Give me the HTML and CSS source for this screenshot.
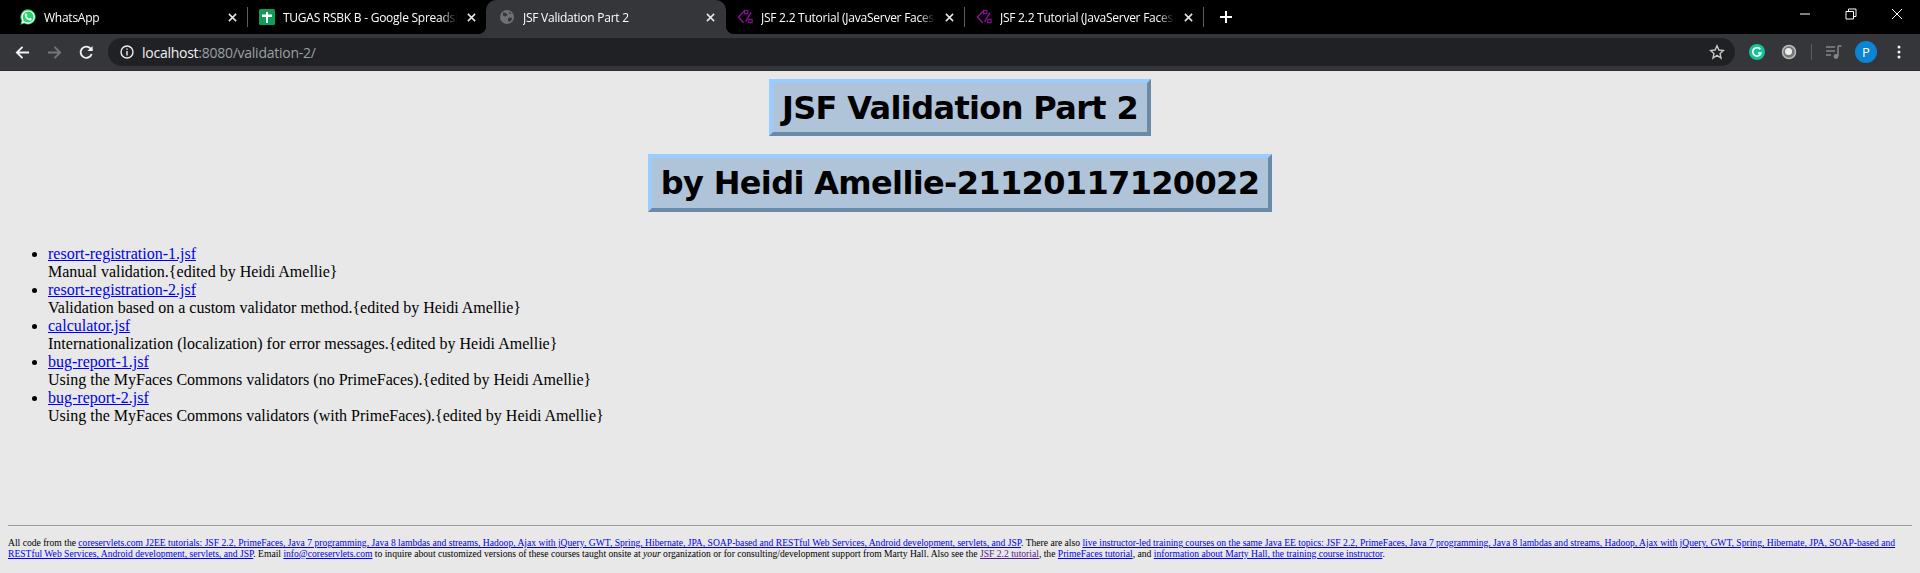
FILE: index.html
```html
<!DOCTYPE html>
<html lang="en">
<head>
<meta charset="utf-8">
<title>JSF Validation Part 2</title>
<link rel="stylesheet" href="styles.css">
</head>
<body>
<header class="chrome">
  <div class="tabstrip">
    <div class="tab tab-first">
      <svg class="favicon" viewBox="0 0 16 16"><path fill="#25d366" d="M8 0.3a7.6 7.6 0 0 0-6.5 11.5L0.4 15.7l4-1.1A7.6 7.6 0 1 0 8 0.3z"/><path fill="none" stroke="#fff" stroke-width="1.2" d="M8 2a6 6 0 0 0-5 9.2l-.6 2.3 2.4-.6A6 6 0 1 0 8 2z"/><path fill="#fff" d="M5.7 4.5c-.6.3-1 1-1 1.8 0 2 2.6 5 5 5.3.9.1 1.7-.4 1.9-1.1l.1-.8-1.7-.9-.8.9c-.9-.3-2-1.4-2.4-2.4l.7-.8-.7-1.9z"/></svg>
      <span class="tab-title">WhatsApp</span>
      <svg class="close" viewBox="0 0 10 10"><path d="M1 1l8 8M9 1l-8 8"/></svg>
    </div>
    <i class="sep"></i>
    <div class="tab tab-second">
      <svg class="favicon" viewBox="0 0 16 16"><rect width="16" height="16" rx="1.5" fill="#0f9d58"/><path fill="#fff" d="M7 3h2v2.500h4V8H9v6H7V8H3V5.500h4z"/></svg>
      <span class="tab-title">TUGAS RSBK B - Google Spreadsheets</span>
      <svg class="close" viewBox="0 0 10 10"><path d="M1 1l8 8M9 1l-8 8"/></svg>
    </div>
    <div class="tab tab-active">
      <svg class="favicon" viewBox="0 0 16 16"><circle cx="8" cy="8" r="7" fill="#6e7074"/><path fill="#35363a" d="M4 3.500l3 .5 1.500 2-2 1.500-2.500-1zM9 9l3.500-.5.500 2-2.500 2.500-1.500-1.500zM10 2.500l2.500 2-2 .5z"/></svg>
      <span class="tab-title">JSF Validation Part 2</span>
      <svg class="close" viewBox="0 0 10 10"><path d="M1 1l8 8M9 1l-8 8"/></svg>
    </div>
    <div class="tab tab-tutorial">
      <svg class="favicon wide" viewBox="0 0 18 16"><path fill="none" stroke="#8e0f9a" stroke-width="1.500" d="M8 1.500L1.500 8 7 14M15 3l-6 10"/><rect x="8" y="1" width="3.500" height="3.500" fill="none" stroke="#8e0f9a" stroke-width="1.200"/><rect x="12.500" y="10.500" width="3.500" height="3.500" fill="none" stroke="#8e0f9a" stroke-width="1.200"/></svg>
      <span class="tab-title">JSF 2.2 Tutorial (JavaServer Faces</span>
      <svg class="close" viewBox="0 0 10 10"><path d="M1 1l8 8M9 1l-8 8"/></svg>
    </div>
    <i class="sep"></i>
    <div class="tab tab-tutorial">
      <svg class="favicon wide" viewBox="0 0 18 16"><path fill="none" stroke="#8e0f9a" stroke-width="1.500" d="M8 1.500L1.500 8 7 14M15 3l-6 10"/><rect x="8" y="1" width="3.500" height="3.500" fill="none" stroke="#8e0f9a" stroke-width="1.200"/><rect x="12.500" y="10.500" width="3.500" height="3.500" fill="none" stroke="#8e0f9a" stroke-width="1.200"/></svg>
      <span class="tab-title">JSF 2.2 Tutorial (JavaServer Faces</span>
      <svg class="close" viewBox="0 0 10 10"><path d="M1 1l8 8M9 1l-8 8"/></svg>
    </div>
    <i class="sep"></i>
    <svg class="newtab" viewBox="0 0 12 12"><path d="M6 0v12M0 6h12"/></svg>
    <div class="window-controls">
      <svg viewBox="0 0 10 10"><path d="M0 5h10"/></svg>
      <svg viewBox="0 0 10 10"><path d="M0 2.500h7.500v7.500H0zM2.500 2.500V0H10v7.500H7.500"/></svg>
      <svg viewBox="0 0 10 10"><path d="M0 0l10 10M10 0L0 10"/></svg>
    </div>
  </div>
  <div class="toolbar">
    <svg class="nav" viewBox="0 0 16 16"><path d="M15 8H2M8 2L2 8l6 6"/></svg>
    <svg class="nav nav-off" viewBox="0 0 16 16"><path d="M1 8h13M8 2l6 6-6 6"/></svg>
    <svg class="nav nav-last" viewBox="0 0 16 16"><path d="M13.500 9.500A6 6 0 1 1 12.200 3.700L14 5.500"/><path class="solid" d="M14.500 1v5.500H9z"/></svg>
    <div class="omnibox">
      <svg class="info" viewBox="0 0 14 14"><circle cx="7" cy="7" r="6"/><path d="M7 6v4.500M7 3.500v1.300"/></svg>
      <span class="url"><b>localhost</b>:8080/validation-2/</span>
      <svg class="star" viewBox="0 0 16 16"><path d="M8 1.800l1.900 4.200 4.600.5-3.400 3.100.9 4.500L8 11.300l-4 2.800.9-4.500L1.500 6.500l4.600-.5z"/></svg>
    </div>
    <svg class="ext" viewBox="0 0 16 16"><circle cx="8" cy="8" r="8" fill="#15c39a"/><path fill="none" stroke="#fff" stroke-width="1.700" d="M11.300 5.300A4.200 4.200 0 1 0 12 9H9"/></svg>
    <svg class="ext ext-orb" viewBox="0 0 16 16"><circle cx="8" cy="8" r="6.500" fill="#777" stroke="#bbb" stroke-width="1.500"/><circle cx="7.500" cy="7.500" r="3.500" fill="#eee"/></svg>
    <i class="tool-sep"></i>
    <svg class="ext ext-media" viewBox="0 0 16 16"><path d="M0 3h9M0 7h9M0 11h5"/><path d="M12 2v10M12 2h3.500"/><circle class="solid" cx="10" cy="12.500" r="2.400"/></svg>
    <span class="avatar">P</span>
    <svg class="kebab" viewBox="0 0 4 14"><circle cx="2" cy="2" r="1.500"/><circle cx="2" cy="7" r="1.500"/><circle cx="2" cy="12" r="1.500"/></svg>
  </div>
</header>
<main class="page">
  <h1 class="title">JSF Validation Part 2</h1>
  <h1 class="title">by Heidi Amellie-21120117120022</h1>
  <ul class="examples">
    <li><a href="#">resort-registration-1.jsf</a><br>Manual validation.{edited by Heidi Amellie}</li>
    <li><a href="#">resort-registration-2.jsf</a><br>Validation based on a custom validator method.{edited by Heidi Amellie}</li>
    <li><a href="#">calculator.jsf</a><br>Internationalization (localization) for error messages.{edited by Heidi Amellie}</li>
    <li><a href="#">bug-report-1.jsf</a><br>Using the MyFaces Commons validators (no PrimeFaces).{edited by Heidi Amellie}</li>
    <li><a href="#">bug-report-2.jsf</a><br>Using the MyFaces Commons validators (with PrimeFaces).{edited by Heidi Amellie}</li>
  </ul>
  <footer class="credits">
    <hr class="rule">
    <p class="credit-text">All code from the <a href="#">coreservlets.com J2EE tutorials: JSF 2.2, PrimeFaces, Java 7 programming, Java 8 lambdas and streams, Hadoop, Ajax with jQuery, GWT, Spring, Hibernate, JPA, SOAP-based and RESTful Web Services, Android development, servlets, and JSP</a>. There are also <a href="#">live instructor-led training courses on the same Java EE topics: JSF 2.2, PrimeFaces, Java 7 programming, Java 8 lambdas and streams, Hadoop, Ajax with jQuery, GWT, Spring, Hibernate, JPA, SOAP-based and RESTful Web Services, Android development, servlets, and JSP</a>. Email <a href="#">info@coreservlets.com</a> to inquire about customized versions of these courses taught onsite at <i>your</i> organization or for consulting/development support from Marty Hall. Also see the <a href="#" class="visited">JSF 2.2 tutorial</a>, the <a href="#">PrimeFaces tutorial</a>, and <a href="#">information about Marty Hall, the training course instructor</a>.</p>
  </footer>
</main>
</body>
</html>
```
FILE: styles.css
```css
* { box-sizing: border-box; }
html, body { margin: 0; height: 100%; }
body { background: #e8e8e8; color: #000; font-family: "Liberation Serif", serif; font-size: 16px; overflow: hidden; display: flex; flex-direction: column; }

.chrome { background: #35363a; flex: none; height: 71px; border-bottom: 1px solid #2a2a2c; }
.tabstrip { display: flex; align-items: center; height: 34px; background: #000; color: #fff; font: 12px "Open Sans", "Liberation Sans", sans-serif; letter-spacing: -0.25px; }
.tab { display: flex; align-items: center; height: 34px; flex: none; width: 238px; padding: 0 10px 0 11px; }
.tab-first { width: 247px; padding-left: 20px; }
.tab-active { position: relative; width: 240px; padding: 0 11px 0 13px; background: #35363a; border-radius: 10px 10px 0 0; }
.tab-active::before, .tab-active::after { content: ""; position: absolute; bottom: 0; width: 8px; height: 8px; }
.tab-active::before { left: -8px; background: radial-gradient(circle at 0 0, transparent 8px, #35363a 8px); }
.tab-active::after { right: -8px; background: radial-gradient(circle at 100% 0, transparent 8px, #35363a 8px); }
.favicon { width: 16px; height: 16px; flex: none; margin-right: 8px; }
.favicon.wide { width: 17px; margin-right: 7px; }
.tab-title { flex: 1; min-width: 0; white-space: nowrap; overflow: hidden; -webkit-mask-image: linear-gradient(to left, transparent, #000 16px); mask-image: linear-gradient(to left, transparent, #000 16px); }
.close { width: 9px; height: 9px; flex: none; margin-left: 10px; stroke: #e8e8e8; stroke-width: 1.700; fill: none; }
.sep { width: 1px; height: 20px; background: #5c5d60; flex: none; }
.newtab { width: 12px; height: 12px; margin-left: 16px; stroke: #fff; stroke-width: 2; flex: none; }
.window-controls { margin-left: auto; display: flex; align-items: center; gap: 36px; padding: 0 18px 6px 0; }
.window-controls svg { width: 10px; height: 10px; stroke: #fff; fill: none; stroke-width: 1; overflow: visible; }

.toolbar { display: flex; align-items: center; height: 36px; padding: 0 19px 0 15px; }
.nav { width: 15px; height: 15px; flex: none; margin-right: 17px; stroke: #f1f1f1; stroke-width: 2; fill: none; }
.nav-off { stroke: #75767a; }
.nav-last { margin-right: 14px; }
.solid { fill: #f1f1f1; stroke: none; }
.omnibox { display: flex; align-items: center; height: 28px; width: 1627px; flex: none; padding: 0 10px 0 12px; border-radius: 14px; background: #202124; color: #9aa0a6; font: 14px "Open Sans", "Liberation Sans", sans-serif; letter-spacing: -0.26px; }
.info { width: 14px; height: 14px; flex: none; margin-right: 8px; stroke: #eee; stroke-width: 1.400; fill: none; }
.url { flex: 1; }
.url b { font-weight: 400; color: #f1f1f1; }
.star { width: 16px; height: 16px; flex: none; stroke: #c8c8c8; stroke-width: 1.400; fill: none; }
.ext { width: 16px; height: 16px; flex: none; margin-left: 14px; }
.ext-orb { margin-left: 16px; }
.ext-media { stroke: #85878a; stroke-width: 1.500; fill: none; }
.ext-media .solid { fill: #85878a; }
.tool-sep { width: 1px; height: 16px; background: #5c5d60; margin-left: 14px; flex: none; }
.avatar { width: 22px; height: 22px; flex: none; margin-left: 13px; border-radius: 50%; background: #0b84d3; color: #fff; font: 13px/22px "Open Sans", sans-serif; text-align: center; }
.kebab { width: 4px; height: 14px; flex: none; margin-left: 20px; fill: #f1f1f1; }

.page { flex: 1; min-height: 0; display: flex; flex-direction: column; align-items: center; padding: 8px 8px 0; }
.title { margin: 0 0 18px; padding: 6px 9px 5px; background: #b0c4d9; border-style: solid; border-width: 4px; border-color: #99ccff #6a8aa8 #6a8aa8 #99ccff; font: bold 32px/1.2 "DejaVu Sans", Verdana, sans-serif; letter-spacing: -0.65px; }
.examples { align-self: stretch; margin: 15px 0 0; padding-left: 40px; }
.examples a, .credit-text a { color: #0000ee; }
.credit-text a.visited { color: #551a8b; }
.credits { align-self: stretch; margin-top: auto; padding-bottom: 14px; }
.rule { margin: 0 0 10px; border: 0; border-top: 1px solid #9a9a9a; border-bottom: 1px solid #eee; }
.credit-text { margin: 0; font-size: 9.6px; line-height: 11px; }
```
